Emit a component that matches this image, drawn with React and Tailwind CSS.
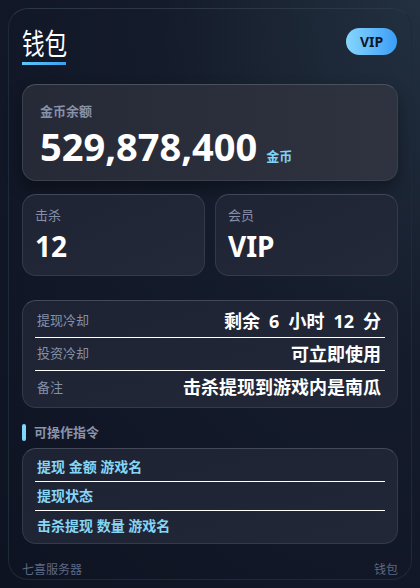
export default function App() {
  const info = [
    { label: "提现冷却", value: "剩余\u20026\u2002小时\u200212\u2002分" },
    { label: "投资冷却", value: "可立即使用" },
    { label: "备注", value: "击杀提现到游戏内是南瓜" },
  ];
  const commands = ["提现 金额 游戏名", "提现状态", "击杀提现 数量 游戏名"];

  return (
    <div
      className="w-[420px] h-[588px] p-2 bg-[radial-gradient(ellipse_at_top_right,#223040_0%,#141b2a_45%,#0e1322_100%)]"
      style={{ fontFamily: '"Noto Sans", "Noto Sans CJK SC", sans-serif' }}
    >
      <div className="h-full flex flex-col rounded-[20px] border border-[#1c2b3a] border-t-[#2b3744] px-[13px]">
        {/* header */}
        <div className="flex items-start justify-between pt-[16px]">
          <div className="flex flex-col">
            <div
              className="text-[29px] leading-[34px] font-normal text-white origin-left scale-x-[0.78] whitespace-nowrap"
              style={{ fontFamily: '"Noto Sans CJK SC", sans-serif' }}
            >
              钱包
            </div>
            <div className="mt-[3px] h-[3px] w-[44px] bg-gradient-to-r from-[#5ec8f8] to-[#3aa0f2]" />
          </div>
          <div className="mt-[3px] mr-[1px] h-[27px] w-[51px] rounded-full bg-gradient-to-r from-[#86d6fd] to-[#3b9df6] flex items-center justify-center text-[14px] font-bold text-[#0d1726]">
            VIP
          </div>
        </div>

        {/* balance */}
        <div className="mt-[19px] rounded-[14px] border border-[#3a404e] border-t-[#4a505d] bg-gradient-to-r from-[#262a37] to-[#2f3340] px-[17px] pt-[16px] pb-[12px] shadow-[0_8px_16px_rgba(0,0,0,0.35)]">
          <div className="text-[13px] leading-[20px] font-bold text-[#8791a8]">金币余额</div>
          <div className="mt-[3px] flex items-baseline">
            <span className="text-[38px] leading-[44px] font-bold text-white">529,878,400</span>
            <span className="ml-[9px] text-[13px] font-bold text-[#7fd4f6]">金币</span>
          </div>
        </div>

        {/* stats */}
        <div className="mt-[13px] grid grid-cols-2 gap-[10px]">
          {[
            { label: "击杀", value: "12" },
            { label: "会员", value: "VIP" },
          ].map((s) => (
            <div
              key={s.label}
              className="rounded-[14px] border border-[#343a4b] border-t-[#414757] bg-gradient-to-br from-[#1f2435] to-[#24293a] px-[12px] pt-[10px] pb-[12px]"
            >
              <div className="text-[13px] leading-[20px] text-[#8590a8]">{s.label}</div>
              <div className="mt-[4px] text-[28px] leading-[34px] font-bold text-white">{s.value}</div>
            </div>
          ))}
        </div>

        {/* info */}
        <div className="mt-[24px] rounded-[14px] border border-[#343a4b] border-t-[#434958] bg-gradient-to-br from-[#1e2333] to-[#232838] px-[12px] pt-[4px] pb-[3px]">
          {info.map((r, i) => (
            <div
              key={r.label}
              className={`h-[33px] flex items-center justify-between pl-[2px] pr-[4px] ${i < info.length - 1 ? "border-b border-white" : ""}`}
            >
              <span className="text-[13px] text-[#8590a8]">{r.label}</span>
              <span className="text-[18px] font-bold text-white">{r.value}</span>
            </div>
          ))}
        </div>

        {/* commands */}
        <div className="mt-[15px] flex items-center gap-[8px]">
          <div className="h-[17px] w-[4px] rounded-full bg-[#7fd6f8]" />
          <span className="text-[13px] font-bold text-[#8a93aa]">可操作指令</span>
        </div>
        <div className="mt-[5px] rounded-[14px] border border-[#343a4b] border-t-[#434958] bg-gradient-to-br from-[#1e2333] to-[#222737] px-[12px] pt-[4px] pb-[3px]">
          {commands.map((c, i) => (
            <div
              key={c}
              className={`h-[29px] flex items-center pl-[2px] ${i < commands.length - 1 ? "border-b border-white" : ""}`}
            >
              <span className="text-[14px] font-bold text-[#86d6f6]">{c}</span>
            </div>
          ))}
        </div>

        {/* footer */}
        <div className="mt-auto flex items-end justify-between pb-[1px]">
          <span className="text-[12px] leading-[16px] text-[#5d6883]">七喜服务器</span>
          <span className="text-[12px] leading-[16px] text-[#5d6883]">钱包</span>
        </div>
      </div>
    </div>
  );
}
